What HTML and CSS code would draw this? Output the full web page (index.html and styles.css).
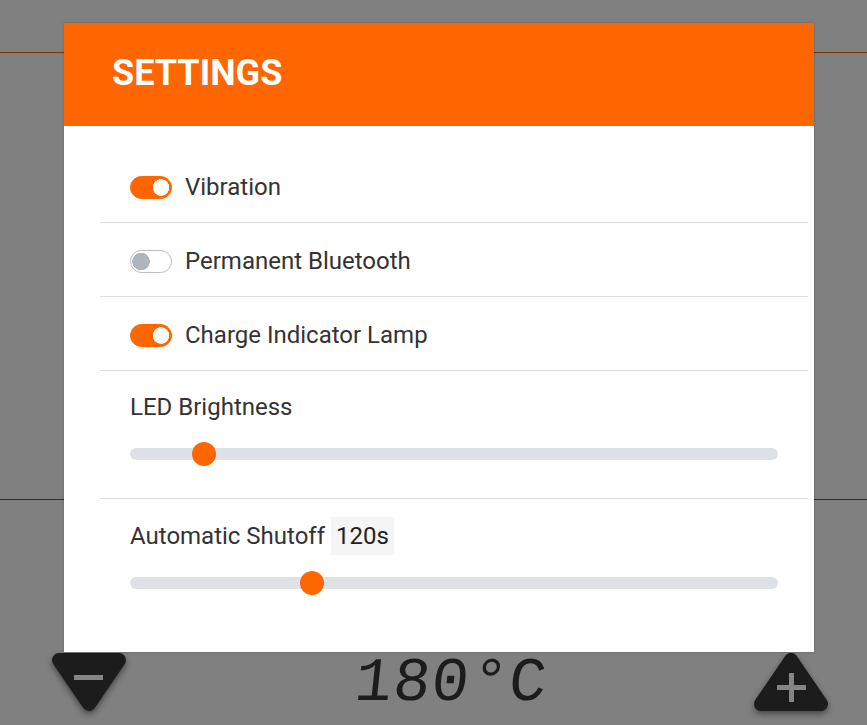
FILE: index.html
```html
<!DOCTYPE html>
<html lang="en">
<head>
  <meta charset="UTF-8" />
  <meta name="viewport" content="width=device-width, initial-scale=1.0"/>
  <title>Settings</title>
  <link rel="stylesheet" href="styles.css">
</head>
<body>
  <div class="app">
    <div class="app-header"></div>
    <div class="app-main"></div>
    <div class="app-footer">
      <button class="temp-btn" aria-label="Decrease">
        <svg width="74" height="58" viewBox="0 0 74 58">
          <polygon points="7,7 67,7 37,51" fill="#1c1c1c" stroke="#1c1c1c" stroke-width="14" stroke-linejoin="round"/>
          <rect x="22" y="22" width="29" height="5" fill="#858585"/>
        </svg>
      </button>
      <div class="temp">180 °C</div>
      <button class="temp-btn" aria-label="Increase">
        <svg width="74" height="58" viewBox="0 0 74 58">
          <polygon points="37,7 67,51 7,51" fill="#1c1c1c" stroke="#1c1c1c" stroke-width="14" stroke-linejoin="round"/>
          <rect x="23" y="32" width="29" height="5" fill="#858585"/>
          <rect x="35" y="20" width="5" height="29" fill="#858585"/>
        </svg>
      </button>
    </div>
  </div>

  <div class="modal">
    <div class="modal-header">
      <h1>SETTINGS</h1>
    </div>
    <div class="modal-body">
      <div class="row">
        <label class="toggle">
          <input type="checkbox" class="switch" checked>
          <span>Vibration</span>
        </label>
      </div>
      <div class="row">
        <label class="toggle">
          <input type="checkbox" class="switch">
          <span>Permanent Bluetooth</span>
        </label>
      </div>
      <div class="row">
        <label class="toggle">
          <input type="checkbox" class="switch" checked>
          <span>Charge Indicator Lamp</span>
        </label>
      </div>
      <div class="row slider-row">
        <div class="slider-label">LED Brightness</div>
        <input type="range" class="range" min="0" max="100" value="10">
      </div>
      <div class="row slider-row last">
        <div class="slider-label">Automatic Shutoff <span class="badge">120s</span></div>
        <input type="range" class="range" min="30" max="360" step="10" value="120">
      </div>
    </div>
  </div>
</body>
</html>
```
FILE: styles.css
```css
* {
  box-sizing: border-box;
  margin: 0;
  padding: 0;
}

body {
  background-color: #808080;
  font-family: Roboto, 'Liberation Sans', sans-serif;
  color: #333;
  width: 867px;
  height: 725px;
  overflow: hidden;
}

.app-header {
  height: 53px;
  border-bottom: 1px solid #803300;
}

.app-main {
  height: 446px;
}

.app-footer {
  border-top: 1px solid #2e2e2e;
  padding: 153px 39px 0 52px;
  display: flex;
  justify-content: space-between;
  align-items: flex-start;
}

.temp-btn {
  background: none;
  border: none;
  display: block;
  filter: drop-shadow(0 3px 3px rgba(0, 0, 0, 0.45));
}

.temp-btn svg {
  display: block;
}

.temp {
  font-family: 'Liberation Mono', monospace;
  font-size: 62px;
  line-height: 58px;
  color: #1c1c1c;
  letter-spacing: 1px;
  word-spacing: -37px;
  transform: skewX(-6deg);
  margin: 2px 0 0 22px;
}

.modal {
  position: absolute;
  top: 23px;
  left: 64px;
  width: 750px;
  background: #fff;
  box-shadow: 0 0 3px rgba(0, 0, 0, 0.2);
}

.modal-header {
  background-color: #ff6600;
  height: 103px;
  padding-left: 48px;
  display: flex;
  align-items: center;
}

.modal-header h1 {
  color: #fff;
  font-size: 36px;
  font-weight: bold;
  margin-top: -4px;
}

.modal-body {
  padding: 23px 6px 26px 36px;
}

.row {
  padding: 23px 30px 20px;
  border-bottom: 1px solid #dedede;
  font-size: 24px;
  line-height: 30px;
}

.toggle {
  display: flex;
  align-items: center;
  gap: 13px;
}

.switch {
  -webkit-appearance: none;
  appearance: none;
  width: 42px;
  height: 23px;
  border-radius: 12px;
  border: 1px solid #bdbdbd;
  background: radial-gradient(circle at 10px 50%, #adb5bd 8.5px, transparent 9px) #fff;
  outline: none;
}

.switch:checked {
  border-color: #ff6600;
  background: radial-gradient(circle at calc(100% - 10px) 50%, #fff 8px, transparent 8.5px) #ff6600;
}

.slider-row {
  padding: 21px 30px 32px;
}

.slider-row.last {
  border-bottom: none;
  padding-top: 22px;
  padding-bottom: 31px;
}

.slider-label {
  margin-bottom: 20px;
}

.badge {
  display: inline-block;
  background-color: #f5f5f5;
  line-height: 38px;
  padding: 0 5px;
  margin: -4px 0 -4px 0;
  vertical-align: top;
  color: #222;
}

.range {
  -webkit-appearance: none;
  appearance: none;
  display: block;
  width: 100%;
  height: 24px;
  background: transparent;
  outline: none;
}

.range::-webkit-slider-runnable-track {
  height: 12px;
  background: #dee2e6;
  border-radius: 6px;
}

.range::-webkit-slider-thumb {
  -webkit-appearance: none;
  width: 24px;
  height: 24px;
  border-radius: 50%;
  background: #ff6600;
  border: none;
  margin-top: -6px;
}
```
